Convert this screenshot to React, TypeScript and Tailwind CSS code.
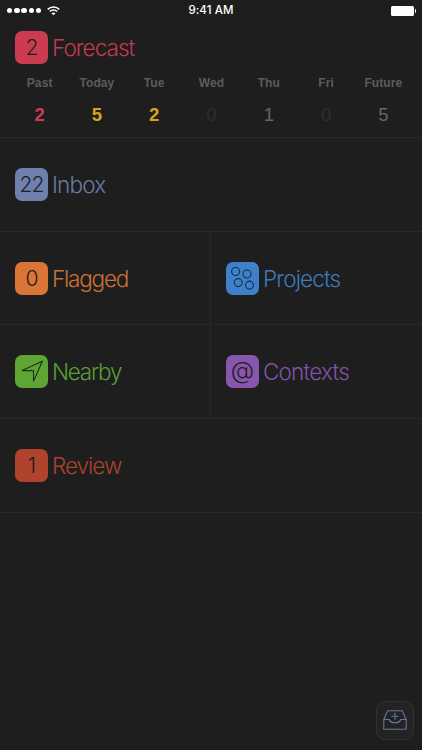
import type { ReactNode } from "react";

interface TileProps {
  label: string;
  icon: ReactNode;
  bg: string;
  text: string;
  tracking: string;
}

const DAYS = [
  { name: "Past", count: 2, color: "font-bold text-[#cc3c56]" },
  { name: "Today", count: 5, color: "font-bold text-[#d5a514]" },
  { name: "Tue", count: 2, color: "font-bold text-[#d5a514]" },
  { name: "Wed", count: 0, color: "text-[#2e2e2e]" },
  { name: "Thu", count: 1, color: "text-[#666666]" },
  { name: "Fri", count: 0, color: "text-[#2e2e2e]" },
  { name: "Future", count: 5, color: "text-[#666666]" },
];

function Tile({ label, icon, bg, text, tracking }: TileProps) {
  return (
    <div className="flex items-center">
      <div className={`flex h-[33px] w-[33px] shrink-0 items-center justify-center rounded-[7px] text-[21px] leading-none font-light tracking-[-0.8px] text-[#1e1e1e] ${bg}`}>
        {icon}
      </div>
      <span className={`ml-1 pt-px text-[22.5px] leading-[32px] font-light whitespace-nowrap ${text} ${tracking}`}>{label}</span>
    </div>
  );
}

function StatusBar() {
  return (
    <header className="grid h-[22px] grid-cols-3 items-center border-b border-[#222222] text-white">
      <div className="flex items-center gap-[1.8px] pl-[7px]">
        {[0, 1, 2, 3, 4].map((i) => (
          <span key={i} className="h-[5.4px] w-[5.4px] rounded-full bg-white" />
        ))}
        <svg className="ml-1" width="13" height="10" viewBox="0 0 13 10" fill="none" stroke="currentColor" strokeWidth="1.5">
          <path d="M.7 3.4C4 .1 9 .1 12.3 3.4M2.8 5.5C4.8 3.5 8.2 3.5 10.2 5.5" />
          <path d="M6.5 9.3L4.5 7.2Q6.5 5.7 8.5 7.2Z" fill="currentColor" stroke="none" />
        </svg>
      </div>
      <time className="pt-px text-center text-[11.5px] leading-none font-medium tracking-[0.1px]">9:41 AM</time>
      <div className="flex items-center justify-end pr-[6px]">
        <span className="h-[10px] w-[23px] rounded-[1.5px] bg-white" />
        <span className="ml-px h-[4px] w-[1px] rounded-r-full bg-white" />
      </div>
    </header>
  );
}

function ProjectsIcon() {
  return (
    <svg width="33" height="33" viewBox="0 0 33 33" fill="none" stroke="#1b2c40" strokeWidth="1.1">
      <circle cx="9.6" cy="9.5" r="4" />
      <circle cx="21" cy="12" r="4" />
      <circle cx="12.2" cy="20.6" r="4" />
      <circle cx="23.5" cy="23.1" r="4" />
    </svg>
  );
}

function NearbyIcon() {
  return (
    <svg width="33" height="33" viewBox="0 0 33 33" fill="none" stroke="#1f301b" strokeWidth="1.1">
      <path d="M27.3 6.3L7 15.6H18.5V26.3Z" />
    </svg>
  );
}

function InboxAddIcon() {
  return (
    <svg className="-mt-0.5" width="24" height="20" viewBox="0 0 24 20" fill="none" stroke="#66779f" strokeWidth="1.1">
      <path d="M.8 9.5L4.600 .8H19.400L23.200 9.500V19.200H.8V9.500H6.300C7 11.700 8.500 12.600 10 12.600H14C15.500 12.600 17 11.700 17.700 9.500H23.200M12 2.700V9.700M8.500 6.200H15.500" />
    </svg>
  );
}

export default function App() {
  return (
    <main className="relative h-[750px] w-[422px] overflow-hidden bg-[#1e1e1e] font-['Inter','Liberation_Sans',sans-serif]">
      <StatusBar />
      <section className="h-[116px] border-b border-[#272727] pt-[9px]">
        <div className="pl-[15px]">
          <Tile label="Forecast" icon="2" bg="bg-[#cc3c50]" text="text-[#c43951]" tracking="tracking-[-0.95px]" />
        </div>
        <div className="mt-[11px] grid grid-cols-7 pr-[10px] pl-[11px] font-['Liberation_Sans',sans-serif]">
          {DAYS.map((day) => (
            <div key={day.name} className="text-center">
              <div className="text-[12px] leading-4 font-bold tracking-[0.1px] text-[#5c5c5c]">{day.name}</div>
              <div className={`mt-[14px] text-[18.5px] leading-5 ${day.color}`}>{day.count}</div>
            </div>
          ))}
        </div>
      </section>
      <section className="flex h-[94px] items-center border-b border-[#272727] pl-[15px]">
        <Tile label="Inbox" icon="22" bg="bg-[#6f80ad]" text="text-[#6a7aa5]" tracking="tracking-[-0.8px]" />
      </section>
      <section className="grid grid-cols-2">
        <div className="flex h-[93px] items-center border-r border-b border-[#272727] pl-[15px]">
          <Tile label="Flagged" icon="0" bg="bg-[#d87537]" text="text-[#cd7036]" tracking="tracking-[-1.2px]" />
        </div>
        <div className="flex h-[93px] items-center border-b border-[#272727] pl-[15px]">
          <Tile label="Projects" icon={<ProjectsIcon />} bg="bg-[#3f80ca]" text="text-[#3e79be]" tracking="tracking-[-0.85px]" />
        </div>
        <div className="flex h-[94px] items-center border-r border-b border-[#272727] pl-[15px]">
          <Tile label="Nearby" icon={<NearbyIcon />} bg="bg-[#5ea535]" text="text-[#5a9c35]" tracking="tracking-[-1.25px]" />
        </div>
        <div className="flex h-[94px] items-center border-b border-[#272727] pl-[15px]">
          <Tile label="Contexts" icon={<span className="-mt-0.5 text-[24px] tracking-normal">@</span>} bg="bg-[#8956ae]" text="text-[#8253a5]" tracking="tracking-[-0.8px]" />
        </div>
      </section>
      <section className="flex h-[94px] items-center border-b border-[#272727] pl-[15px]">
        <Tile label="Review" icon="1" bg="bg-[#b0432d]" text="text-[#aa432e]" tracking="tracking-[-1px]" />
      </section>
      <button type="button" aria-label="Add to inbox" className="absolute right-[8px] bottom-[10px] flex h-[39px] w-[38px] items-center justify-center rounded-[9px] border border-[#323232] bg-[#232323]">
        <InboxAddIcon />
      </button>
    </main>
  );
}
